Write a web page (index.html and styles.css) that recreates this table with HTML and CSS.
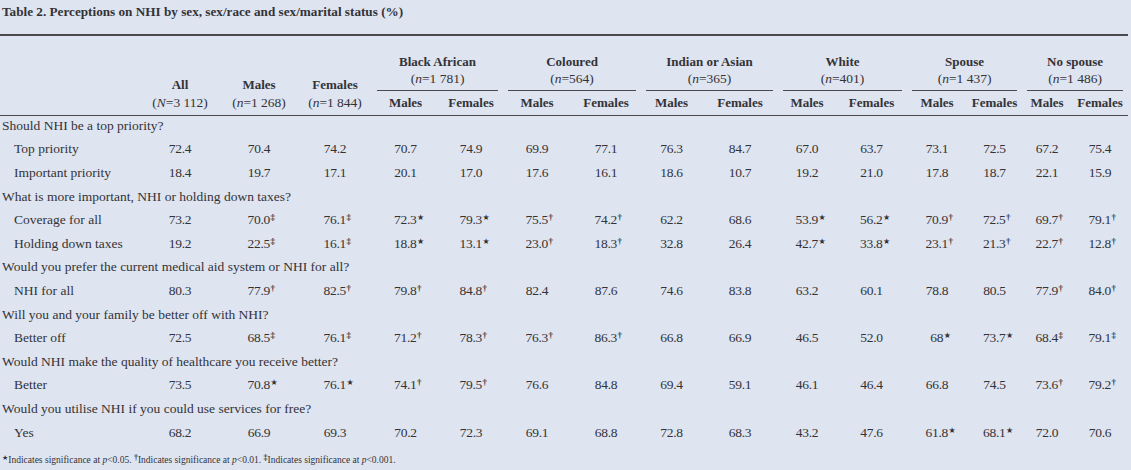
FILE: index.html
```html
<!DOCTYPE html>
<html lang="en">
<head>
<meta charset="utf-8">
<title>Table 2</title>
<link rel="stylesheet" href="styles.css">
</head>
<body>
<div class="page">
  <h1 class="title">Table 2. Perceptions on NHI by sex, sex/race and sex/marital status (%)</h1>
  <table class="tbl">
    <colgroup>
      <col class="w-label">
      <col class="w-all">
      <col class="w-males">
      <col class="w-females">
      <col class="w-ba-m"><col class="w-ba-f">
      <col class="w-co-m"><col class="w-co-f">
      <col class="w-in-m"><col class="w-in-f">
      <col class="w-wh-m"><col class="w-wh-f">
      <col class="w-sp-m"><col class="w-sp-f">
      <col class="w-ns-m"><col class="w-ns-f">
    </colgroup>
    <thead>
      <tr class="h-top">
        <th rowspan="2" class="h-tot"></th>
        <th rowspan="2" class="h-tot">All<br><span class="n">(<i>N</i>=3 112)</span></th>
        <th rowspan="2" class="h-tot">Males<br><span class="n">(<i>n</i>=1 268)</span></th>
        <th rowspan="2" class="h-tot">Females<br><span class="n">(<i>n</i>=1 844)</span></th>
        <th colspan="2" class="grp">Black African<br><span class="n">(<i>n</i>=1 781)</span></th>
        <th colspan="2" class="grp">Coloured<br><span class="n">(<i>n</i>=564)</span></th>
        <th colspan="2" class="grp">Indian or Asian<br><span class="n">(<i>n</i>=365)</span></th>
        <th colspan="2" class="grp">White<br><span class="n">(<i>n</i>=401)</span></th>
        <th colspan="2" class="grp">Spouse<br><span class="n">(<i>n</i>=1 437)</span></th>
        <th colspan="2" class="grp">No spouse<br><span class="n">(<i>n</i>=1 486)</span></th>
      </tr>
      <tr class="h-sub">
        <th>Males</th><th>Females</th>
        <th>Males</th><th>Females</th>
        <th>Males</th><th>Females</th>
        <th>Males</th><th>Females</th>
        <th>Males</th><th>Females</th>
        <th>Males</th><th>Females</th>
      </tr>
    </thead>
    <tbody>
      <tr class="cat"><td colspan="16">Should NHI be a top priority?</td></tr>
      <tr class="row">
        <td class="lbl">Top priority</td>
        <td>72.4</td><td>70.4</td><td>74.2</td>
        <td>70.7</td><td>74.9</td><td>69.9</td><td>77.1</td><td>76.3</td><td>84.7</td>
        <td>67.0</td><td>63.7</td><td>73.1</td><td>72.5</td><td>67.2</td><td>75.4</td>
      </tr>
      <tr class="row">
        <td class="lbl">Important priority</td>
        <td>18.4</td><td>19.7</td><td>17.1</td>
        <td>20.1</td><td>17.0</td><td>17.6</td><td>16.1</td><td>18.6</td><td>10.7</td>
        <td>19.2</td><td>21.0</td><td>17.8</td><td>18.7</td><td>22.1</td><td>15.9</td>
      </tr>
      <tr class="cat"><td colspan="16">What is more important, NHI or holding down taxes?</td></tr>
      <tr class="row">
        <td class="lbl">Coverage for all</td>
        <td>73.2</td><td>70.0<sup class="sig">‡</sup></td><td>76.1<sup class="sig">‡</sup></td>
        <td>72.3<sup class="sig star">★</sup></td><td>79.3<sup class="sig star">★</sup></td>
        <td>75.5<sup class="sig">†</sup></td><td>74.2<sup class="sig">†</sup></td>
        <td>62.2</td><td>68.6</td>
        <td>53.9<sup class="sig star">★</sup></td><td>56.2<sup class="sig star">★</sup></td>
        <td>70.9<sup class="sig">†</sup></td><td>72.5<sup class="sig">†</sup></td>
        <td>69.7<sup class="sig">†</sup></td><td>79.1<sup class="sig">†</sup></td>
      </tr>
      <tr class="row">
        <td class="lbl">Holding down taxes</td>
        <td>19.2</td><td>22.5<sup class="sig">‡</sup></td><td>16.1<sup class="sig">‡</sup></td>
        <td>18.8<sup class="sig star">★</sup></td><td>13.1<sup class="sig star">★</sup></td>
        <td>23.0<sup class="sig">†</sup></td><td>18.3<sup class="sig">†</sup></td>
        <td>32.8</td><td>26.4</td>
        <td>42.7<sup class="sig star">★</sup></td><td>33.8<sup class="sig star">★</sup></td>
        <td>23.1<sup class="sig">†</sup></td><td>21.3<sup class="sig">†</sup></td>
        <td>22.7<sup class="sig">†</sup></td><td>12.8<sup class="sig">†</sup></td>
      </tr>
      <tr class="cat"><td colspan="16">Would you prefer the current medical aid system or NHI for all?</td></tr>
      <tr class="row">
        <td class="lbl">NHI for all</td>
        <td>80.3</td><td>77.9<sup class="sig">†</sup></td><td>82.5<sup class="sig">†</sup></td>
        <td>79.8<sup class="sig">†</sup></td><td>84.8<sup class="sig">†</sup></td>
        <td>82.4</td><td>87.6</td><td>74.6</td><td>83.8</td>
        <td>63.2</td><td>60.1</td><td>78.8</td><td>80.5</td>
        <td>77.9<sup class="sig">†</sup></td><td>84.0<sup class="sig">†</sup></td>
      </tr>
      <tr class="cat"><td colspan="16">Will you and your family be better off with NHI?</td></tr>
      <tr class="row">
        <td class="lbl">Better off</td>
        <td>72.5</td><td>68.5<sup class="sig">‡</sup></td><td>76.1<sup class="sig">‡</sup></td>
        <td>71.2<sup class="sig">†</sup></td><td>78.3<sup class="sig">†</sup></td>
        <td>76.3<sup class="sig">†</sup></td><td>86.3<sup class="sig">†</sup></td>
        <td>66.8</td><td>66.9</td><td>46.5</td><td>52.0</td>
        <td>68<sup class="sig star">★</sup></td><td>73.7<sup class="sig star">★</sup></td>
        <td>68.4<sup class="sig">‡</sup></td><td>79.1<sup class="sig">‡</sup></td>
      </tr>
      <tr class="cat"><td colspan="16">Would NHI make the quality of healthcare you receive better?</td></tr>
      <tr class="row">
        <td class="lbl">Better</td>
        <td>73.5</td><td>70.8<sup class="sig star">★</sup></td><td>76.1<sup class="sig star">★</sup></td>
        <td>74.1<sup class="sig">†</sup></td><td>79.5<sup class="sig">†</sup></td>
        <td>76.6</td><td>84.8</td><td>69.4</td><td>59.1</td>
        <td>46.1</td><td>46.4</td><td>66.8</td><td>74.5</td>
        <td>73.6<sup class="sig">†</sup></td><td>79.2<sup class="sig">†</sup></td>
      </tr>
      <tr class="cat"><td colspan="16">Would you utilise NHI if you could use services for free?</td></tr>
      <tr class="row">
        <td class="lbl">Yes</td>
        <td>68.2</td><td>66.9</td><td>69.3</td>
        <td>70.2</td><td>72.3</td><td>69.1</td><td>68.8</td><td>72.8</td><td>68.3</td>
        <td>43.2</td><td>47.6</td>
        <td>61.8<sup class="sig star">★</sup></td><td>68.1<sup class="sig star">★</sup></td>
        <td>72.0</td><td>70.6</td>
      </tr>
    </tbody>
  </table>
  <p class="foot"><sup class="fs star">★</sup>Indicates significance at <i>p</i>&lt;0.05. <sup class="fs">†</sup>Indicates significance at <i>p</i>&lt;0.01. <sup class="fs">‡</sup>Indicates significance at <i>p</i>&lt;0.001.</p>
</div>
</body>
</html>
```

FILE: styles.css
```css
:root {
  --bg: #dfe4f1;
  --ink: #333336;
  --rule: #4a4a4e;
}

html, body {
  margin: 0;
  padding: 0;
  background: var(--bg);
}

.page {
  width: 1131px;
  height: 470px;
  overflow: hidden;
  color: var(--ink);
  font-family: "Liberation Serif", "Times New Roman", serif;
  font-size: 13.5px;
}

.title {
  margin: 0;
  padding: 4px 0 0 2px;
  font-size: 13.2px;
  line-height: 16px;
  font-weight: bold;
}

.tbl {
  margin-top: 14px;
  width: 1128px;
  table-layout: fixed;
  border-collapse: collapse;
  border-top: 2px solid var(--rule);
}

.tbl thead {
  border-bottom: 1px solid var(--rule);
}

.w-label { width: 140px; }
.w-all { width: 80px; }
.w-males { width: 78px; }
.w-females { width: 74px; }
.w-ba-m { width: 67px; }
.w-ba-f { width: 64px; }
.w-co-m { width: 68px; }
.w-co-f { width: 70px; }
.w-in-m { width: 61px; }
.w-in-f { width: 76px; }
.w-wh-m { width: 58px; }
.w-wh-f { width: 71px; }
.w-sp-m { width: 60px; }
.w-sp-f { width: 55px; }
.w-ns-m { width: 50px; }
.w-ns-f { width: 56px; }

.tbl th {
  padding: 0;
  text-align: center;
  font-weight: bold;
  font-size: 13px;
  white-space: nowrap;
}

.tbl .n {
  font-weight: normal;
  font-size: 13.5px;
}

.h-tot {
  vertical-align: bottom;
  line-height: 18px;
  padding-bottom: 3px !important;
}

.grp {
  vertical-align: top;
  line-height: 17px;
  padding: 17px 0 4px !important;
  background: linear-gradient(var(--rule), var(--rule)) no-repeat center bottom / calc(100% - 10px) 1px;
}

.h-sub th {
  height: 24px;
  line-height: 18px;
  vertical-align: middle;
}

.tbl td {
  padding: 0 0 4px;
  text-align: center;
  white-space: nowrap;
  vertical-align: middle;
  line-height: 15px;
  letter-spacing: -0.3px;
}

.tbl tbody tr {
  height: 23.6px;
}

.tbl td.lbl,
.tbl tr.cat td {
  text-align: left;
  letter-spacing: 0;
}

.tbl td.lbl {
  padding-left: 14px;
}

.tbl tr.cat td {
  padding-left: 2px;
}

.sig {
  display: inline-block;
  width: 0;
  margin-left: 0.5px;
  font-size: 9px;
  font-weight: bold;
  line-height: 0;
  vertical-align: 4px;
  letter-spacing: 0;
}

.star {
  font-family: "DejaVu Sans", sans-serif;
  font-size: 8px;
  font-weight: normal;
}

.foot {
  margin: 8px 0 0 2px;
  font-size: 9.5px;
  line-height: 12px;
}

.fs {
  font-size: 8px;
  font-weight: bold;
  line-height: 0;
  vertical-align: 3px;
}

.fs.star {
  font-size: 7px;
  font-weight: normal;
}
```
